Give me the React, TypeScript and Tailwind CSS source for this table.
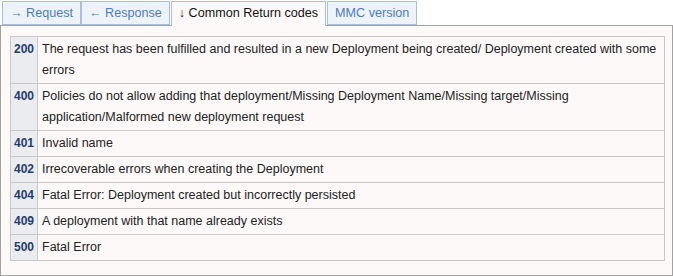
import React from 'react';

const rows: { code: string; text: string }[] = [
  { code: '200', text: 'The request has been fulfilled and resulted in a new Deployment being created/ Deployment created with some errors' },
  { code: '400', text: 'Policies do not allow adding that deployment/Missing Deployment Name/Missing target/Missing application/Malformed new deployment request' },
  { code: '401', text: 'Invalid name' },
  { code: '402', text: 'Irrecoverable errors when creating the Deployment' },
  { code: '404', text: 'Fatal Error: Deployment created but incorrectly persisted' },
  { code: '409', text: 'A deployment with that name already exists' },
  { code: '500', text: 'Fatal Error' },
];

const tabs = [
  { label: '→ Request', active: false },
  { label: '← Response', active: false },
  { label: '↓ Common Return codes', active: true },
  { label: 'MMC version', active: false },
];

export default function App() {
  return (
    <div className="w-[673px] h-[276px] bg-white pt-[1px] text-[12.5px] leading-[21px]" style={{ fontFamily: '"Liberation Sans", Arial, sans-serif' }}>
      {/* Tabs */}
      <div className="flex pl-[2px] h-[24px] relative z-10">
        {tabs.map(t => (
          <div
            key={t.label}
            className={
              t.active
                ? 'px-[7px] mx-[1px] h-[25px] pt-[1px] border border-b-0 border-[#a7bfdf] bg-[#fdf9f8] text-[#111] text-[12.6px]'
                : 'px-[7px] h-[24px] pt-[1px] border border-[#a7bfdf] bg-[#eef3fa] text-[#4a7cc4] text-[12.6px]'
            }
          >
            {t.label}
          </div>
        ))}
      </div>

      {/* Panel */}
      <div className="h-[251px] border border-[#a2a2a2] bg-[#fdf9f8] pt-[10px] pl-[9px] pr-[7px]">
        <table className="w-full border-collapse border border-[#c8c8c8]">
          <tbody>
            {rows.map(r => (
              <tr key={r.code}>
                <td className="w-[27px] align-top border border-[#c8c8c8] bg-[#eaecf0] px-[3px] py-[2px] text-[12px] font-bold text-[#1f3c6e] text-center">
                  {r.code}
                </td>
                <td className="align-top border border-[#c8c8c8] pl-[4px] pr-[3px] py-[2px] text-[#222]">
                  {r.text}
                </td>
              </tr>
            ))}
          </tbody>
        </table>
      </div>
    </div>
  );
}
